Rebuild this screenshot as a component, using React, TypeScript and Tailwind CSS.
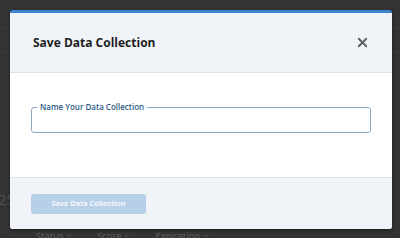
import { X, ChevronDown } from 'lucide-react'

const font = { fontFamily: '"Open Sans", "Noto Sans", sans-serif' }

function Backdrop() {
  return (
    <div className="absolute inset-0 flex flex-col text-[#585858]">
      <div className="h-[28px] border-b border-[#3a3a3a]" />
      <div className="h-[24px] border-b border-[#3a3a3a]" />
      <div className="flex-1" />
      <div className="h-[18px] flex items-center text-[15px] leading-none text-[#4f4f4f] -translate-x-[2px]">25</div>
      <div className="h-[20px]" />
      <div className="flex items-center gap-[24px] pl-[36px] h-[10px] text-[9px] font-semibold translate-y-[3px]">
        <span className="flex items-center gap-[2px]">Status <ChevronDown size={8} /></span>
        <span className="flex items-center gap-[2px]">Score <ChevronDown size={8} /></span>
        <span className="flex items-center gap-[2px]">Expiration <ChevronDown size={8} /></span>
      </div>
    </div>
  )
}

export default function App() {
  return (
    <div className="relative w-[400px] h-[238px] overflow-hidden bg-[#333333]" style={font}>
      <Backdrop />
      <div className="absolute left-[10px] top-[10px] w-[382px] h-[219px] flex flex-col overflow-hidden rounded-[3px] border-t-[3px] border-[#3d86cf] bg-white shadow-[0_1px_3px_rgba(0,0,0,0.5)]">
        <div className="h-[60px] shrink-0 flex items-center justify-between pl-[23px] pr-[22px] bg-[#f0f4f8] border-b-[1.5px] border-[#dce2e8]">
          <h2 className="text-[12px] font-bold text-[#1e1e1e]">Save Data Collection</h2>
          <button className="text-[#5a5f66]">
            <X size={15} strokeWidth={3} />
          </button>
        </div>
        <div className="flex-1 px-[21px] pt-[34px]">
          <div className="relative h-[26px] rounded-[3px] border-[1.5px] border-[#8ea9c4]">
            <span className="absolute left-[5px] -top-[7px] px-[3px] bg-white text-[8px] leading-[12px] font-semibold text-[#2c5a85]">
              Name Your Data Collection
            </span>
          </div>
        </div>
        <div className="h-[52px] shrink-0 flex items-center px-[21px] bg-[#f0f4f8] border-t-[1.5px] border-[#dce2e8]">
          <button className="w-[115px] h-[20px] rounded-[3px] bg-[#b7d0e8] text-white text-[7.5px] font-semibold">
            Save Data Collection
          </button>
        </div>
      </div>
    </div>
  )
}
